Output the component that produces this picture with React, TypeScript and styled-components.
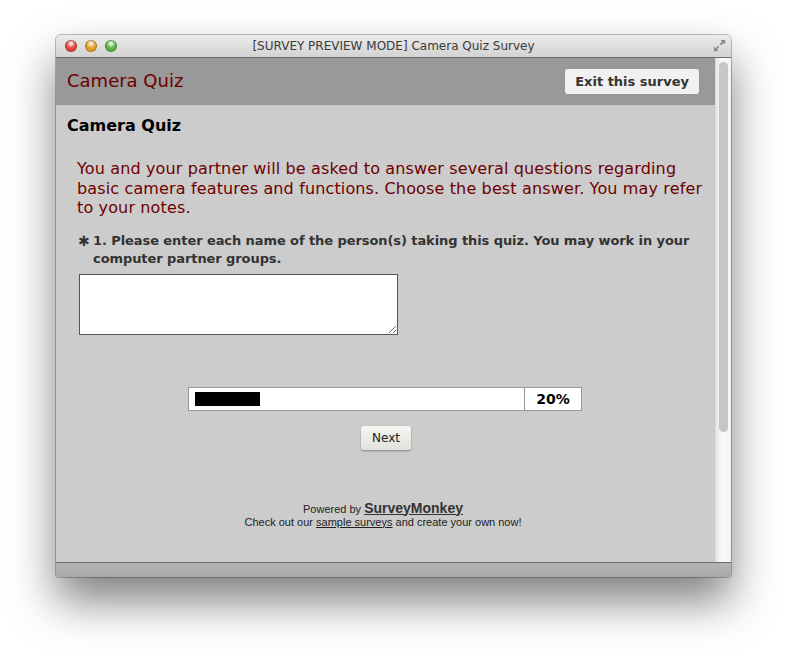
import styled, { createGlobalStyle } from 'styled-components';

const GlobalStyle = createGlobalStyle`
  html, body {
    margin: 0;
    padding: 0;
    background: #ffffff;
  }
`;

const progress = 20;

export default function App() {
  return (
    <>
      <GlobalStyle />
      <Stage>
        <Window>
          <TitleBar>
            <Lights>
              <Light $color="#e0443e" />
              <Light $color="#dea123" />
              <Light $color="#5fb345" />
            </Lights>
            <Title>[SURVEY PREVIEW MODE] Camera Quiz Survey</Title>
            <Resize viewBox="0 0 16 16">
              <path d="M9 2h5v5l-1.8-1.8-2.5 2.5-1.4-1.4 2.5-2.5z" fill="#8a8a8a" />
              <path d="M7 14H2V9l1.8 1.8 2.5-2.5 1.4 1.4-2.5 2.5z" fill="#8a8a8a" />
            </Resize>
          </TitleBar>
          <Main>
            <Page>
              <Header>
                <SurveyName>Camera Quiz</SurveyName>
                <ExitButton>Exit this survey</ExitButton>
              </Header>
              <Body>
                <PageTitle>Camera Quiz</PageTitle>
                <Intro>
                  You and your partner will be asked to answer several questions regarding basic
                  camera features and functions. Choose the best answer. You may refer to your
                  notes.
                </Intro>
                <Question>
                  <Required>✱</Required>
                  <QuestionText>
                    1. Please enter each name of the person(s) taking this quiz. You may work in
                    your computer partner groups.
                  </QuestionText>
                </Question>
                <Answer />
                <ProgressRow>
                  <ProgressTrack>
                    <ProgressFill style={{ width: `${progress}%` }} />
                  </ProgressTrack>
                  <ProgressLabel>{progress}%</ProgressLabel>
                </ProgressRow>
                <NextRow>
                  <NextButton>Next</NextButton>
                </NextRow>
                <Footer>
                  <div>
                    Powered by <Brand href="#">SurveyMonkey</Brand>
                  </div>
                  <div>
                    Check out our <FooterLink href="#">sample surveys</FooterLink> and create your
                    own now!
                  </div>
                </Footer>
              </Body>
            </Page>
            <ScrollTrack>
              <ScrollThumb />
            </ScrollTrack>
          </Main>
          <BottomBar />
        </Window>
      </Stage>
    </>
  );
}

const Stage = styled.div`
  padding: 35px 0 0 56px;
  height: 656px;
  box-sizing: border-box;
`;

const Window = styled.div`
  width: 675px;
  height: 542px;
  display: flex;
  flex-direction: column;
  border-radius: 5px 5px 3px 3px;
  overflow: hidden;
  box-shadow: 0 0 0 1px rgba(0, 0, 0, 0.25), 0 24px 45px rgba(0, 0, 0, 0.5);
`;

const TitleBar = styled.div`
  height: 23px;
  flex: none;
  display: flex;
  align-items: center;
  position: relative;
  background: linear-gradient(#ebebeb, #d3d3d3);
  border-bottom: 1px solid #6f6f6f;
  box-sizing: border-box;
`;

const Lights = styled.div`
  display: flex;
  gap: 8px;
  padding-left: 9px;
`;

const Light = styled.span<{ $color: string }>`
  width: 12px;
  height: 12px;
  border-radius: 50%;
  background: radial-gradient(circle at 50% 30%, #ffffff 0%, ${(p) => p.$color} 45%, ${(p) => p.$color} 100%);
  box-shadow: inset 0 0 0 1px rgba(0, 0, 0, 0.25);
`;

const Title = styled.div`
  position: absolute;
  left: 0;
  right: 0;
  text-align: center;
  font-family: "DejaVu Sans", sans-serif;
  font-size: 12px;
  color: #3a3a3a;
  pointer-events: none;
`;

const Resize = styled.svg`
  position: absolute;
  right: 4px;
  top: 3px;
  width: 15px;
  height: 15px;
`;

const Main = styled.div`
  flex: 1;
  display: flex;
  min-height: 0;
`;

const Page = styled.div`
  flex: 1;
  background: #cccccc;
  display: flex;
  flex-direction: column;
`;

const Header = styled.div`
  height: 47px;
  background: #999999;
  display: flex;
  align-items: center;
  justify-content: space-between;
  padding: 0 16px 0 11px;
`;

const SurveyName = styled.div`
  font-family: "DejaVu Sans", Verdana, sans-serif;
  font-size: 18px;
  color: #6e0000;
  margin-top: -2px;
`;

const ExitButton = styled.button`
  height: 25px;
  padding: 0 10px;
  border: none;
  border-radius: 3px;
  background: #f1f1f1;
  font-family: "DejaVu Sans", Verdana, sans-serif;
  font-weight: bold;
  font-size: 13px;
  color: #333333;
  margin-top: -1px;
`;

const Body = styled.div`
  padding: 11px 8px 0 11px;
  font-family: "DejaVu Sans", Verdana, sans-serif;
`;

const PageTitle = styled.div`
  font-weight: bold;
  font-size: 16px;
  color: #000000;
  line-height: 20px;
`;

const Intro = styled.p`
  margin: 23px 0 0 10px;
  font-size: 16px;
  line-height: 19.5px;
  letter-spacing: 0.14px;
  color: #6e0000;
`;

const Question = styled.div`
  display: flex;
  margin: 14px 0 0 11px;
  font-size: 13px;
  font-weight: bold;
  line-height: 18px;
  letter-spacing: -0.08px;
  color: #333333;
`;

const Required = styled.span`
  width: 15px;
  flex: none;
  font-size: 14px;
`;

const QuestionText = styled.span``;

const Answer = styled.textarea`
  display: block;
  width: 319px;
  height: 61px;
  margin: 6px 0 0 12px;
  box-sizing: border-box;
  border: 1px solid #555555;
  background: #ffffff;
  padding: 2px;
`;

const ProgressRow = styled.div`
  display: flex;
  width: 394px;
  height: 24px;
  margin: 52px auto 0;
  position: relative;
  left: -2px;
`;

const ProgressTrack = styled.div`
  flex: 1;
  border: 1px solid #999999;
  background: #ffffff;
  padding: 4px 6px;
  box-sizing: border-box;
`;

const ProgressFill = styled.div`
  height: 100%;
  background: #000000;
`;

const ProgressLabel = styled.div`
  width: 57px;
  border: 1px solid #999999;
  border-left: none;
  background: #ffffff;
  box-sizing: border-box;
  display: flex;
  align-items: center;
  justify-content: center;
  font-weight: bold;
  font-size: 14px;
  color: #000000;
`;

const NextRow = styled.div`
  display: flex;
  justify-content: center;
  margin-top: 15px;
  position: relative;
  left: -1px;
`;

const NextButton = styled.button`
  width: 50px;
  height: 24px;
  border: none;
  border-radius: 3px;
  background: linear-gradient(#f6f6f2, #e2e2dc);
  box-shadow: 0 1px 2px rgba(0, 0, 0, 0.35);
  font-family: "DejaVu Sans", sans-serif;
  font-size: 12px;
  color: #222222;
`;

const Footer = styled.div`
  margin-top: 52px;
  text-align: center;
  font-family: "Liberation Sans", Arial, sans-serif;
  font-size: 11px;
  line-height: 13px;
  color: #222222;
  position: relative;
  left: -4px;
`;

const Brand = styled.a`
  font-weight: bold;
  font-size: 14px;
  color: #333333;
  text-decoration: underline;
`;

const FooterLink = styled.a`
  color: #222222;
  text-decoration: underline;
`;

const ScrollTrack = styled.div`
  width: 16px;
  flex: none;
  background: linear-gradient(90deg, #e6e6e6, #fafafa 40%, #f3f3f3);
  border-left: 1px solid #dcdcdc;
  padding: 4px 3px 0 3px;
  box-sizing: border-box;
`;

const ScrollThumb = styled.div`
  height: 370px;
  border-radius: 5px;
  background: #c6c6c6;
`;

const BottomBar = styled.div`
  height: 15px;
  flex: none;
  background: linear-gradient(#b6b6b6, #a8a8a8);
  border-top: 1px solid #6a6a6a;
  box-sizing: border-box;
`;
